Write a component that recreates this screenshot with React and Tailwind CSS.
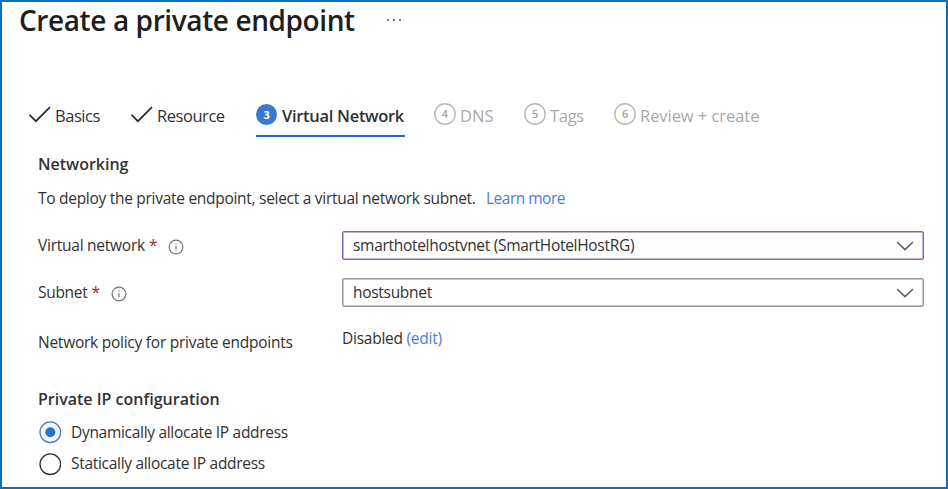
import React from "react";

function Check() {
  return (
    <svg className="mb-[3px] h-[22px] w-[22px] shrink-0" viewBox="0 0 22 22" fill="none" stroke="#2b2a29" strokeWidth="1.7">
      <path d="M0.5 10.8 L6.9 17.2 L21 3.2" />
    </svg>
  );
}

function Info() {
  return (
    <svg className="mt-px h-4 w-4 shrink-0" viewBox="0 0 16 16" fill="none" stroke="#737373">
      <circle cx="8" cy="8" r="6.9" strokeWidth="1.2" />
      <path d="M8 7v4.5M8 4.4v1.4" strokeWidth="1.1" />
    </svg>
  );
}

function Chevron() {
  return (
    <svg className="h-[10px] w-[18px] shrink-0" viewBox="0 0 18 10" fill="none" stroke="#5c5b5a" strokeWidth="1.5">
      <path d="M1 1 L9 8.6 L17 1" />
    </svg>
  );
}

function PendingStep({ number, label, className }) {
  return (
    <div className={`flex h-6 items-center text-[#a9a8a7] ${className}`}>
      <svg className="mr-1 mb-1 h-[22px] w-[22px] shrink-0" viewBox="0 0 22 22">
        <circle cx="11" cy="11" r="10.2" fill="none" stroke="#b9b8b7" strokeWidth="1.4" />
        <text x="11" y="14.8" textAnchor="middle" fill="#a3a2a1" className="text-[11px] font-semibold">
          {number}
        </text>
      </svg>
      {label}
    </div>
  );
}

function Select({ value, className }) {
  return (
    <div className={`flex h-[29px] w-[582px] items-center justify-between rounded-[2px] border pr-[9px] pl-[10px] shadow-[inset_0_0_0_0.5px] ${className}`}>
      <span className="pt-px text-[#323130]">{value}</span>
      <Chevron />
    </div>
  );
}

export default function App() {
  return (
    <main className="h-[489px] w-[948px] overflow-hidden border-2 border-[#0a70c0] bg-white font-['Open_Sans','Noto_Sans',sans-serif] text-[15.5px] tracking-[-0.3px] whitespace-nowrap text-[#323130]">
      <header className="flex h-9 items-center pl-[17px]">
        <h1 className="w-[337px] text-[28px] leading-9 font-semibold tracking-[-0.4px] text-[#1f1e1d]">Create a private endpoint</h1>
        <span className="ml-[31px] flex gap-[4px]">
          <i className="h-[2px] w-[2px] bg-[#777]" />
          <i className="h-[2px] w-[2px] bg-[#777]" />
          <i className="h-[2px] w-[2px] bg-[#777]" />
        </span>
      </header>

      <nav className="mt-[66px] flex h-[33px] items-start pl-[27px] text-[16.5px] leading-6">
        <div className="flex h-6 w-[102px] items-center gap-1">
          <Check />
          <span className="tracking-[-0.45px]">Basics</span>
        </div>
        <div className="flex h-6 w-[125px] items-center gap-1">
          <Check />
          <span className="tracking-[-0.45px]">Resource</span>
        </div>
        <div className="flex h-[33px] w-[149px] items-start border-b-2 border-[#2b6cc4] font-semibold">
          <span className="mr-[5px] flex h-[21px] w-[21px] shrink-0 items-center justify-center rounded-full bg-[#3b78d0] text-[11px] font-bold text-white">
            3
          </span>
          <span className="tracking-[-0.3px]">Virtual Network</span>
        </div>
        <PendingStep number="4" label="DNS" className="ml-[29px] w-[90px] tracking-normal" />
        <PendingStep number="5" label="Tags" className="w-[90px]" />
        <PendingStep number="6" label="Review + create" className="tracking-[-0.05px]" />
      </nav>

      <section className="pl-[36px]">
        <h2 className="mt-[15px] h-6 text-base leading-6 font-semibold tracking-normal">Networking</h2>
        <p className="mt-[10px] flex h-6 leading-6">
          <span className="w-[448px] tracking-[-0.285px]">To deploy the private endpoint, select a virtual network subnet.</span>
          <a className="tracking-[-0.5px] text-[#4a7fd6]">Learn more</a>
        </p>

        <div className="mt-[21px] flex h-[29px] items-center">
          <div className="flex w-[304px] items-center pt-px">
            <span className="tracking-[-0.25px]">Virtual network</span>
            <span className="mr-[11px] ml-1 text-[#a4262c]">*</span>
            <Info />
          </div>
          <Select value="smarthotelhostvnet (SmartHotelHostRG)" className="border-[#8a5fae] text-[#8a5fae]" />
        </div>
        <div className="mt-[18px] flex h-[29px] items-center">
          <div className="flex w-[304px] items-center pt-px">
            <span>Subnet</span>
            <span className="mr-[11px] ml-1 text-[#a4262c]">*</span>
            <Info />
          </div>
          <Select value="hostsubnet" className="border-[#979593] text-[#979593]" />
        </div>
        <div className="mt-[19px] flex h-7 items-start leading-6">
          <span className="mt-1 w-[304px] tracking-[-0.25px]">Network policy for private endpoints</span>
          <span className="tracking-[-0.25px]">Disabled <a className="text-[#4a7fd6]">(edit)</a></span>
        </div>

        <h2 className="mt-[33px] h-6 text-base leading-6 font-semibold tracking-normal">Private IP configuration</h2>
        <label className="mt-[10px] flex h-6 items-center">
          <svg className="mr-[10px] mb-px h-[23px] w-[23px]" viewBox="0 0 23 23">
            <circle cx="12.3" cy="11.2" r="10.3" fill="#f4f9ff" stroke="#4a80cc" strokeWidth="1.3" />
            <circle cx="12.3" cy="11.2" r="5" fill="#2f6fd0" />
          </svg>
          <span>Dynamically allocate IP address</span>
        </label>
        <label className="mt-[7px] flex h-6 items-center">
          <svg className="mr-[10px] h-[23px] w-[23px]" viewBox="0 0 23 23">
            <circle cx="12.3" cy="11.2" r="10.3" fill="none" stroke="#323130" strokeWidth="1.3" />
          </svg>
          <span>Statically allocate IP address</span>
        </label>
      </section>
    </main>
  );
}
